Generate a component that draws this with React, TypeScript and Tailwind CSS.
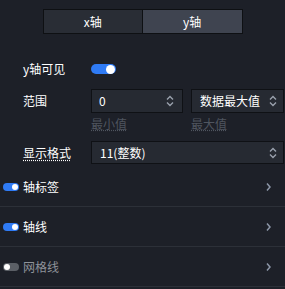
import React from "react";

const font = { fontFamily: '"Noto Sans CJK SC", "Noto Sans", sans-serif' };

function Spinner() {
  return (
    <svg width="8" height="12" viewBox="0 0 8 12" className="shrink-0">
      <path d="M1 4.5 L4 1.5 L7 4.5" fill="none" stroke="#9aa1ad" strokeWidth="1.4" />
      <path d="M1 7.5 L4 10.5 L7 7.5" fill="none" stroke="#9aa1ad" strokeWidth="1.4" />
    </svg>
  );
}

function Chevron() {
  return (
    <svg width="5" height="8" viewBox="0 0 5 8">
      <path d="M1 0.5 L4 4 L1 7.5" fill="none" stroke="#8d97a8" strokeWidth="1.5" />
    </svg>
  );
}

function BigToggle() {
  return (
    <div className="w-[25px] h-[10px] rounded-full bg-[#2f7bf5] relative">
      <div className="absolute right-[1px] top-[0.5px] w-[9px] h-[9px] rounded-full bg-white" />
    </div>
  );
}

function SmallToggle({ on }: { on: boolean }) {
  return (
    <div className={`w-[16px] h-[8px] rounded-full relative ${on ? "bg-[#2f7bf5]" : "bg-[#5b5f66]"}`}>
      <div className={`absolute top-[1px] w-[6px] h-[6px] rounded-full bg-white ${on ? "right-[1px]" : "left-[1px]"}`} />
    </div>
  );
}

function Section({ label, on }: { label: string; on: boolean }) {
  return (
    <div className="h-[40px] flex items-center border-b border-[#2c3038] pl-[3px] pr-[14px]">
      <SmallToggle on={on} />
      <span className={`ml-[4px] text-[12px] ${on ? "text-white" : "text-[#8e929a]"}`}>{label}</span>
      <div className="ml-auto"><Chevron /></div>
    </div>
  );
}

export default function App() {
  return (
    <div className="w-[285px] h-[289px] bg-[#1d2028] overflow-hidden" style={font}>
      <div className="pt-[9px] flex justify-center">
        <div className="flex w-[200px] h-[25px] border border-[#0e1013] text-[12px] text-white">
          <div className="flex-1 flex items-center justify-center bg-[#292d35]">x轴</div>
          <div className="flex-1 flex items-center justify-center bg-[#3f4450] border-l border-[#0e1013]">y轴</div>
        </div>
      </div>

      <div className="pl-[23px] pt-[25px] text-[12px] text-white">
        <div className="flex items-center h-[20px]">
          <span className="w-[68px]">y轴可见</span>
          <BigToggle />
        </div>

        <div className="flex items-center mt-[10px]">
          <span className="w-[68px]">范围</span>
          <div className="flex gap-[8px]">
            <div className="w-[92px] h-[24px] flex items-center pl-[7px] pr-[8px] bg-[#262a32] border border-[#0f1115]">
              <span className="flex-1">0</span>
              <Spinner />
            </div>
            <div className="w-[93px] h-[24px] flex items-center pl-[8px] pr-[6px] bg-[#262a32] border border-[#0f1115]">
              <span className="flex-1 whitespace-nowrap">数据最大值</span>
              <Spinner />
            </div>
          </div>
        </div>
        <div className="flex h-[22px] items-center text-[#4f555f]">
          <span className="w-[68px]" />
          <span className="w-[100px] underline decoration-dotted">最小值</span>
          <span className="underline decoration-dotted">最大值</span>
        </div>

        <div className="flex items-center mt-[6px]">
          <span className="w-[68px] underline decoration-dotted underline-offset-2">显示格式</span>
          <div className="w-[193px] h-[23px] flex items-center pl-[8px] pr-[6px] bg-[#262a32] border border-[#0f1115]">
            <span className="flex-1">11(整数)</span>
            <Spinner />
          </div>
        </div>
      </div>

      <div className="mt-[3px]">
        <Section label="轴标签" on={true} />
        <Section label="轴线" on={true} />
        <Section label="网格线" on={false} />
      </div>
    </div>
  );
}
